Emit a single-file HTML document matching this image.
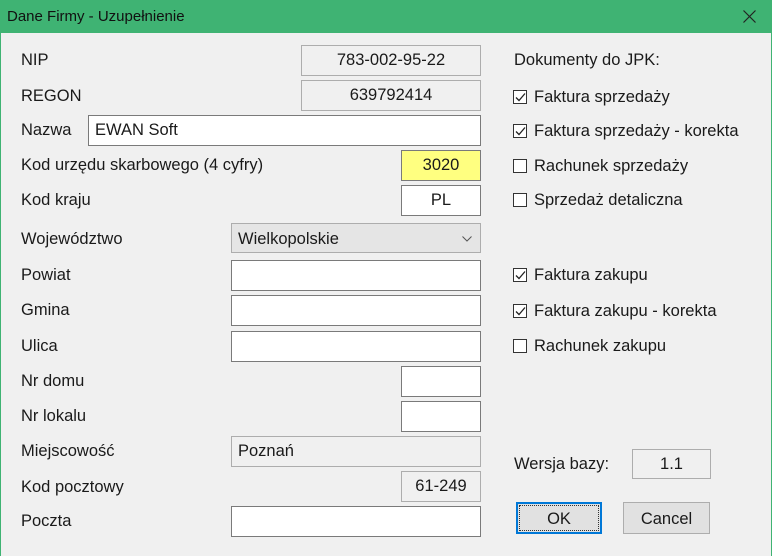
<!DOCTYPE html>
<html><head><meta charset="utf-8"><style>
*{margin:0;padding:0;box-sizing:border-box}
body{width:772px;height:556px;background:#f0f0f0;font-family:"Liberation Sans",sans-serif;font-size:16.5px;color:#1a1a1a;position:relative;overflow:hidden}
.tb{position:absolute;left:0;top:0;width:772px;height:33px;background:#3fb373;color:#111;font-size:15px}
.tb span{position:absolute;left:7px;top:8px}
.x{position:absolute;right:16px;top:10px}
.bl{position:absolute;left:0;top:33px;width:1px;height:523px;background:#3fb373}
.br{position:absolute;right:0;top:33px;width:1px;height:523px;background:#3fb373}
.l{position:absolute;line-height:18px;white-space:nowrap}
.b{position:absolute;border:1px solid #7a7a7a;background:#fff;height:31px;line-height:29px;padding:0 6px;white-space:nowrap}
.g{background:#f0f0f0;border-color:#adadad}
.c{text-align:center}
.cb{position:absolute;left:513px;width:14px;height:14px;border:1px solid #333;background:#fff}
.cb svg{position:absolute;left:1px;top:1px}
.btn{position:absolute;height:32px;background:#e1e1e1;border:1px solid #adadad;text-align:center;line-height:30px;font-size:16.5px}
</style></head><body>
<div class="tb"><span>Dane Firmy - Uzupełnienie</span><svg class="x" width="13" height="13"><path d="M0.5 0.5L12.5 12.5M12.5 0.5L0.5 12.5" stroke="#222" stroke-width="1.2"/></svg></div>
<div class="bl"></div><div class="br"></div>

<div class="l" style="left:21px;top:51px">NIP</div>
<div class="b g c" style="left:301px;top:45px;width:180px">783-002-95-22</div>
<div class="l" style="left:21px;top:87px">REGON</div>
<div class="b g c" style="left:301px;top:80px;width:180px">639792414</div>
<div class="l" style="left:21px;top:121px">Nazwa</div>
<div class="b" style="left:88px;top:115px;width:393px">EWAN Soft</div>
<div class="l" style="left:21px;top:156px">Kod urzędu skarbowego (4 cyfry)</div>
<div class="b c" style="left:401px;top:150px;width:80px;background:#ffff80">3020</div>
<div class="l" style="left:21px;top:191px">Kod kraju</div>
<div class="b c" style="left:401px;top:185px;width:80px">PL</div>
<div class="l" style="left:21px;top:230px">Województwo</div>
<div class="b" style="left:231px;top:223px;width:250px;height:30px;line-height:30px;background:#e5e5e5;border-color:#adadad">Wielkopolskie<svg style="position:absolute;right:8px;top:12px" width="10" height="6"><path d="M0.5 0.5L5 5L9.5 0.5" fill="none" stroke="#555"/></svg></div>
<div class="l" style="left:21px;top:266px">Powiat</div>
<div class="b" style="left:231px;top:260px;width:250px"></div>
<div class="l" style="left:21px;top:301px">Gmina</div>
<div class="b" style="left:231px;top:295px;width:250px"></div>
<div class="l" style="left:21px;top:337px">Ulica</div>
<div class="b" style="left:231px;top:331px;width:250px"></div>
<div class="l" style="left:21px;top:372px">Nr domu</div>
<div class="b" style="left:401px;top:366px;width:80px"></div>
<div class="l" style="left:21px;top:407px">Nr lokalu</div>
<div class="b" style="left:401px;top:401px;width:80px"></div>
<div class="l" style="left:21px;top:442px">Miejscowość</div>
<div class="b g" style="left:231px;top:436px;width:250px">Poznań</div>
<div class="l" style="left:21px;top:478px">Kod pocztowy</div>
<div class="b g c" style="left:401px;top:471px;width:80px">61-249</div>
<div class="l" style="left:21px;top:512px">Poczta</div>
<div class="b" style="left:231px;top:506px;width:250px"></div>

<div class="l" style="left:514px;top:51px">Dokumenty do JPK:</div>
<div class="cb" style="top:90px"><svg width="11" height="11"><path d="M1 5.5L4 8.5L10 1.5" fill="none" stroke="#222" stroke-width="1.3"/></svg></div>
<div class="l" style="left:534px;top:88px">Faktura sprzedaży</div>
<div class="cb" style="top:124px"><svg width="11" height="11"><path d="M1 5.5L4 8.5L10 1.5" fill="none" stroke="#222" stroke-width="1.3"/></svg></div>
<div class="l" style="left:534px;top:122px">Faktura sprzedaży - korekta</div>
<div class="cb" style="top:159px"></div>
<div class="l" style="left:534px;top:157px">Rachunek sprzedaży</div>
<div class="cb" style="top:193px"></div>
<div class="l" style="left:534px;top:191px">Sprzedaż detaliczna</div>
<div class="cb" style="top:268px"><svg width="11" height="11"><path d="M1 5.5L4 8.5L10 1.5" fill="none" stroke="#222" stroke-width="1.3"/></svg></div>
<div class="l" style="left:534px;top:266px">Faktura zakupu</div>
<div class="cb" style="top:304px"><svg width="11" height="11"><path d="M1 5.5L4 8.5L10 1.5" fill="none" stroke="#222" stroke-width="1.3"/></svg></div>
<div class="l" style="left:534px;top:302px">Faktura zakupu - korekta</div>
<div class="cb" style="top:339px"></div>
<div class="l" style="left:534px;top:337px">Rachunek zakupu</div>

<div class="l" style="left:514px;top:455px">Wersja bazy:</div>
<div class="b g c" style="left:632px;top:449px;width:79px;height:30px;line-height:28px">1.1</div>
<div class="btn" style="left:516px;top:502px;width:86px;border:2px solid #0078d7;line-height:30px"><div style="position:absolute;left:1px;top:1px;right:1px;bottom:1px;border:1px dotted #333"></div>OK</div>
<div class="btn" style="left:623px;top:502px;width:87px;line-height:32px">Cancel</div>
</body></html>
